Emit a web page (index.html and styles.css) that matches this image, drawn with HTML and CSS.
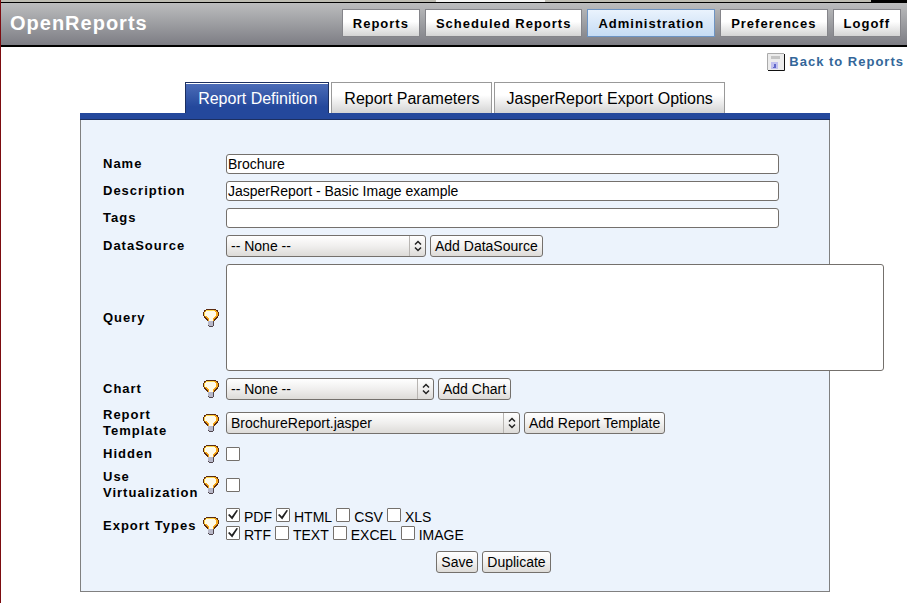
FILE: index.html
```
<!DOCTYPE html>
<html lang="en">
<head>
    <meta charset="UTF-8">
    <meta name="viewport" content="width=device-width, initial-scale=1.0">
    <title>OpenReports</title>
    <link rel="stylesheet" href="styles.css">
</head>
<body>

<svg class="defs" width="0" height="0" aria-hidden="true">
    <symbol id="bulb" viewBox="0 0 16 18">
        <path d="M3 0h10v1h2v2h1v4h-1v2h-1v1h-1v1h-1v1H4v-1H3v-1H2V9H1V7H0V3h1V1h2z" fill="#5a2a10"/>
        <path d="M3 1h10v1h1v1h1v4h-1v1h-1v1h-1v1h-1v2H5v-2H4V9H3V8H2V7H1V3h1V2h1z" fill="#f8a818"/>
        <path d="M3 2h9v1h1v4h-1v1h-1v1h-1v3H6V9H5V8H4V7H2V3h1z" fill="#fffae8"/>
        <path d="M1 3h1v4H1zM3 1h8v1H3z" fill="#ffd848"/>
        <path d="M5 12h6v5h-1v1H6v-1H5z" fill="#50464e"/>
        <path d="M5 12h5v5H6v-1H5z" fill="#b8b8c8"/>
    </symbol>
    <symbol id="arrows" viewBox="0 0 8 12">
        <path d="M1 4.500L4 1.500l3 3M1 7.500l3 3l3-3" fill="none" stroke="#222" stroke-width="1.500"/>
    </symbol>
</svg>

<div class="strip"></div>
<header class="topbar">
    <h1>OpenReports</h1>
    <nav>
        <a href="#">Reports</a>
        <a href="#">Scheduled Reports</a>
        <a href="#" class="current">Administration</a>
        <a href="#">Preferences</a>
        <a href="#">Logoff</a>
    </nav>
</header>

<div class="back">
    <a href="#">
        <svg width="18" height="18" viewBox="0 0 18 18" aria-hidden="true">
            <path d="M.5 17V.5H17" fill="none" stroke="#aaa"/>
            <path d="M1 1h16v16H1z" fill="#ececec"/>
            <path d="M17.500 1v16.500H1" fill="none" stroke="#111"/>
            <path d="M4 3h9v3H4z" fill="#c4c4c4"/>
            <path d="M4 9h7v7H4z" fill="#c0c0ee"/>
            <path d="M7 11h2v4H6v-1h1z" fill="#6068c8"/>
        </svg>
        Back to Reports
    </a>
</div>

<main>
    <div class="tabs">
        <a href="#" class="active">Report Definition</a>
        <a href="#">Report Parameters</a>
        <a href="#">JasperReport Export Options</a>
    </div>

    <form class="panel">
        <div class="fields">
            <label for="name">Name</label>
            <input class="text" type="text" id="name" value="Brochure">

            <label for="description">Description</label>
            <input class="text" type="text" id="description" value="JasperReport - Basic Image example">

            <label for="tags">Tags</label>
            <input class="text" type="text" id="tags">

            <label for="datasource">DataSource</label>
            <div class="field">
                <span class="select datasource">
                    <select id="datasource"><option>-- None --</option></select>
                    <svg><use href="#arrows"/></svg>
                </span>
                <button type="button">Add DataSource</button>
            </div>

            <label for="query">Query</label>
            <svg class="bulb"><use href="#bulb"/></svg>
            <textarea id="query"></textarea>

            <label for="chart">Chart</label>
            <svg class="bulb"><use href="#bulb"/></svg>
            <div class="field">
                <span class="select chart">
                    <select id="chart"><option>-- None --</option></select>
                    <svg><use href="#arrows"/></svg>
                </span>
                <button type="button">Add Chart</button>
            </div>

            <label for="template">Report Template</label>
            <svg class="bulb"><use href="#bulb"/></svg>
            <div class="field">
                <span class="select template">
                    <select id="template"><option>BrochureReport.jasper</option></select>
                    <svg><use href="#arrows"/></svg>
                </span>
                <button type="button">Add Report Template</button>
            </div>

            <label for="hidden">Hidden</label>
            <svg class="bulb"><use href="#bulb"/></svg>
            <div class="field"><input type="checkbox" id="hidden"></div>

            <label for="virtual">Use Virtualization</label>
            <svg class="bulb"><use href="#bulb"/></svg>
            <div class="field"><input type="checkbox" id="virtual"></div>

            <span class="label" id="types">Export Types</span>
            <svg class="bulb"><use href="#bulb"/></svg>
            <div role="group" aria-labelledby="types">
                <div class="types">
                    <label><input type="checkbox" checked>PDF</label>
                    <label><input type="checkbox" checked>HTML</label>
                    <label><input type="checkbox">CSV</label>
                    <label><input type="checkbox">XLS</label>
                </div>
                <div class="types">
                    <label><input type="checkbox" checked>RTF</label>
                    <label><input type="checkbox">TEXT</label>
                    <label><input type="checkbox">EXCEL</label>
                    <label><input type="checkbox">IMAGE</label>
                </div>
            </div>

            <div class="actions">
                <button type="submit">Save</button>
                <button type="button">Duplicate</button>
            </div>
        </div>
    </form>
</main>

</body>
</html>
```
FILE: styles.css
```
* {
    box-sizing: border-box;
}
body {
    margin: 0;
    min-height: 100vh;
    border-left: 1px solid #7c0c10;
    background: #fff;
    color: #000;
    font-family: "Liberation Sans", Arial, sans-serif;
    font-size: 14px;
}
.defs {
    display: block;
}
a {
    text-decoration: none;
}

/* header */
.strip {
    height: 2px;
    background: linear-gradient(90deg, #bdbcb2 48%, #f4f4f2 48% 60%, #bdbcb2 60% 96%, #000 96%);
}
.topbar {
    display: flex;
    align-items: center;
    justify-content: space-between;
    height: 45px;
    padding: 0 6px 2px 9px;
    border-top: 1px solid #000;
    border-bottom: 2px solid #000;
    background: linear-gradient(#bcbdbe, #7d7d84);
}
.topbar h1 {
    margin: 0;
    color: #fff;
    font-size: 20px;
    letter-spacing: 1px;
}
.topbar nav {
    display: flex;
    gap: 5px;
}
.topbar nav a {
    height: 28px;
    padding: 0 10px;
    border: 1px solid #85858a;
    background: linear-gradient(#fff 45%, #d4d4d4);
    color: #000;
    font-size: 13px;
    font-weight: bold;
    line-height: 27px;
    letter-spacing: 1px;
}
.topbar nav a.current {
    border-color: #6d94c4;
    background: linear-gradient(#eaf3fd, #c6dcf4);
}

.back {
    display: flex;
    justify-content: flex-end;
    padding: 6px 3px 0 0;
}
.back a {
    display: flex;
    align-items: center;
    gap: 4px;
    color: #336699;
    font-size: 13px;
    font-weight: bold;
    line-height: 16px;
    letter-spacing: 1px;
}

/* tabs */
main {
    width: 752px;
    margin: 11px auto 0;
    padding-left: 2px;
}
.tabs {
    display: flex;
    justify-content: center;
    gap: 2px;
}
.tabs a {
    height: 31px;
    padding: 0 11px 0 12px;
    border: 1px solid #999;
    border-bottom: 0;
    background: linear-gradient(#fff 40%, #d4d4d4);
    box-shadow: inset 0 1px #fff;
    color: #000;
    font-size: 16px;
    line-height: 31px;
}
.tabs a.active {
    border-color: #1c2f60;
    background: linear-gradient(#4d6db8, #24489c 80%);
    color: #fff;
}

/* form */
.panel {
    padding: 34px 22px 18px;
    border: 1px solid #808080;
    border-top: 0;
    background: #ecf3fc;
}
.panel::before {
    content: "";
    display: block;
    height: 6px;
    margin: -34px -23px 34px;
    border-bottom: 1px solid #1c2f60;
    background: #24489c;
}
.fields {
    display: grid;
    grid-template-columns: 100px 23px max-content;
    row-gap: 7px;
    align-items: center;
}
.fields > label,
.label {
    grid-column: 1;
    font-size: 13px;
    font-weight: bold;
    line-height: 16px;
    letter-spacing: 1px;
}
.bulb {
    grid-column: 2;
    width: 16px;
    height: 18px;
    margin: -1px 0;
}
.text,
.field,
textarea,
[role="group"] {
    grid-column: 3;
}
.field {
    display: flex;
    align-items: center;
    gap: 4px;
}
.text,
textarea,
select,
button {
    margin: 0;
    border: 1px solid #74706c;
    border-radius: 3px;
    color: #000;
    font-family: inherit;
    font-size: 14px;
}
.text {
    width: 84%;
    height: 20px;
    padding: 0 1px;
    background: #fff;
}
textarea {
    display: block;
    width: 658px;
    height: 107px;
    background: #fff;
    resize: none;
}
.select {
    display: grid;
    grid-template-columns: 1fr 17px;
    align-items: center;
}
.select select {
    grid-area: 1 / 1 / 2 / 3;
    width: 100%;
    height: 22px;
    padding: 0 4px;
    appearance: none;
    background: linear-gradient(#fff, #f0efee 50%, #dddbd8);
}
.select svg {
    grid-area: 1 / 2 / 2 / 3;
    width: 17px;
    height: 20px;
    padding: 4px;
    border-left: 1px solid #b8b5b2;
    pointer-events: none;
}
.datasource {
    width: 200px;
}
.chart {
    width: 208px;
}
.template {
    width: 294px;
}
button {
    height: 22px;
    padding: 0 4px;
    background: linear-gradient(#fff, #f2f1f0 50%, #dddbd8);
}
input[type="checkbox"] {
    display: block;
    width: 14px;
    height: 14px;
    margin: 0;
    appearance: none;
    border: 1px solid #74706c;
    border-radius: 1px;
    background: #fff;
}
input[type="checkbox"]:checked::before {
    content: "";
    display: block;
    width: 10px;
    height: 10px;
    margin: 1px;
    background: #222;
    clip-path: polygon(0 50%, 15% 40%, 38% 65%, 85% 0, 100% 5%, 42% 95%);
}
.types {
    display: flex;
    gap: 4px;
    height: 18px;
}
.types label {
    display: flex;
    gap: 4px;
    line-height: 18px;
}
.actions {
    grid-column: 1 / 4;
    display: flex;
    justify-content: center;
    gap: 4px;
}
```
